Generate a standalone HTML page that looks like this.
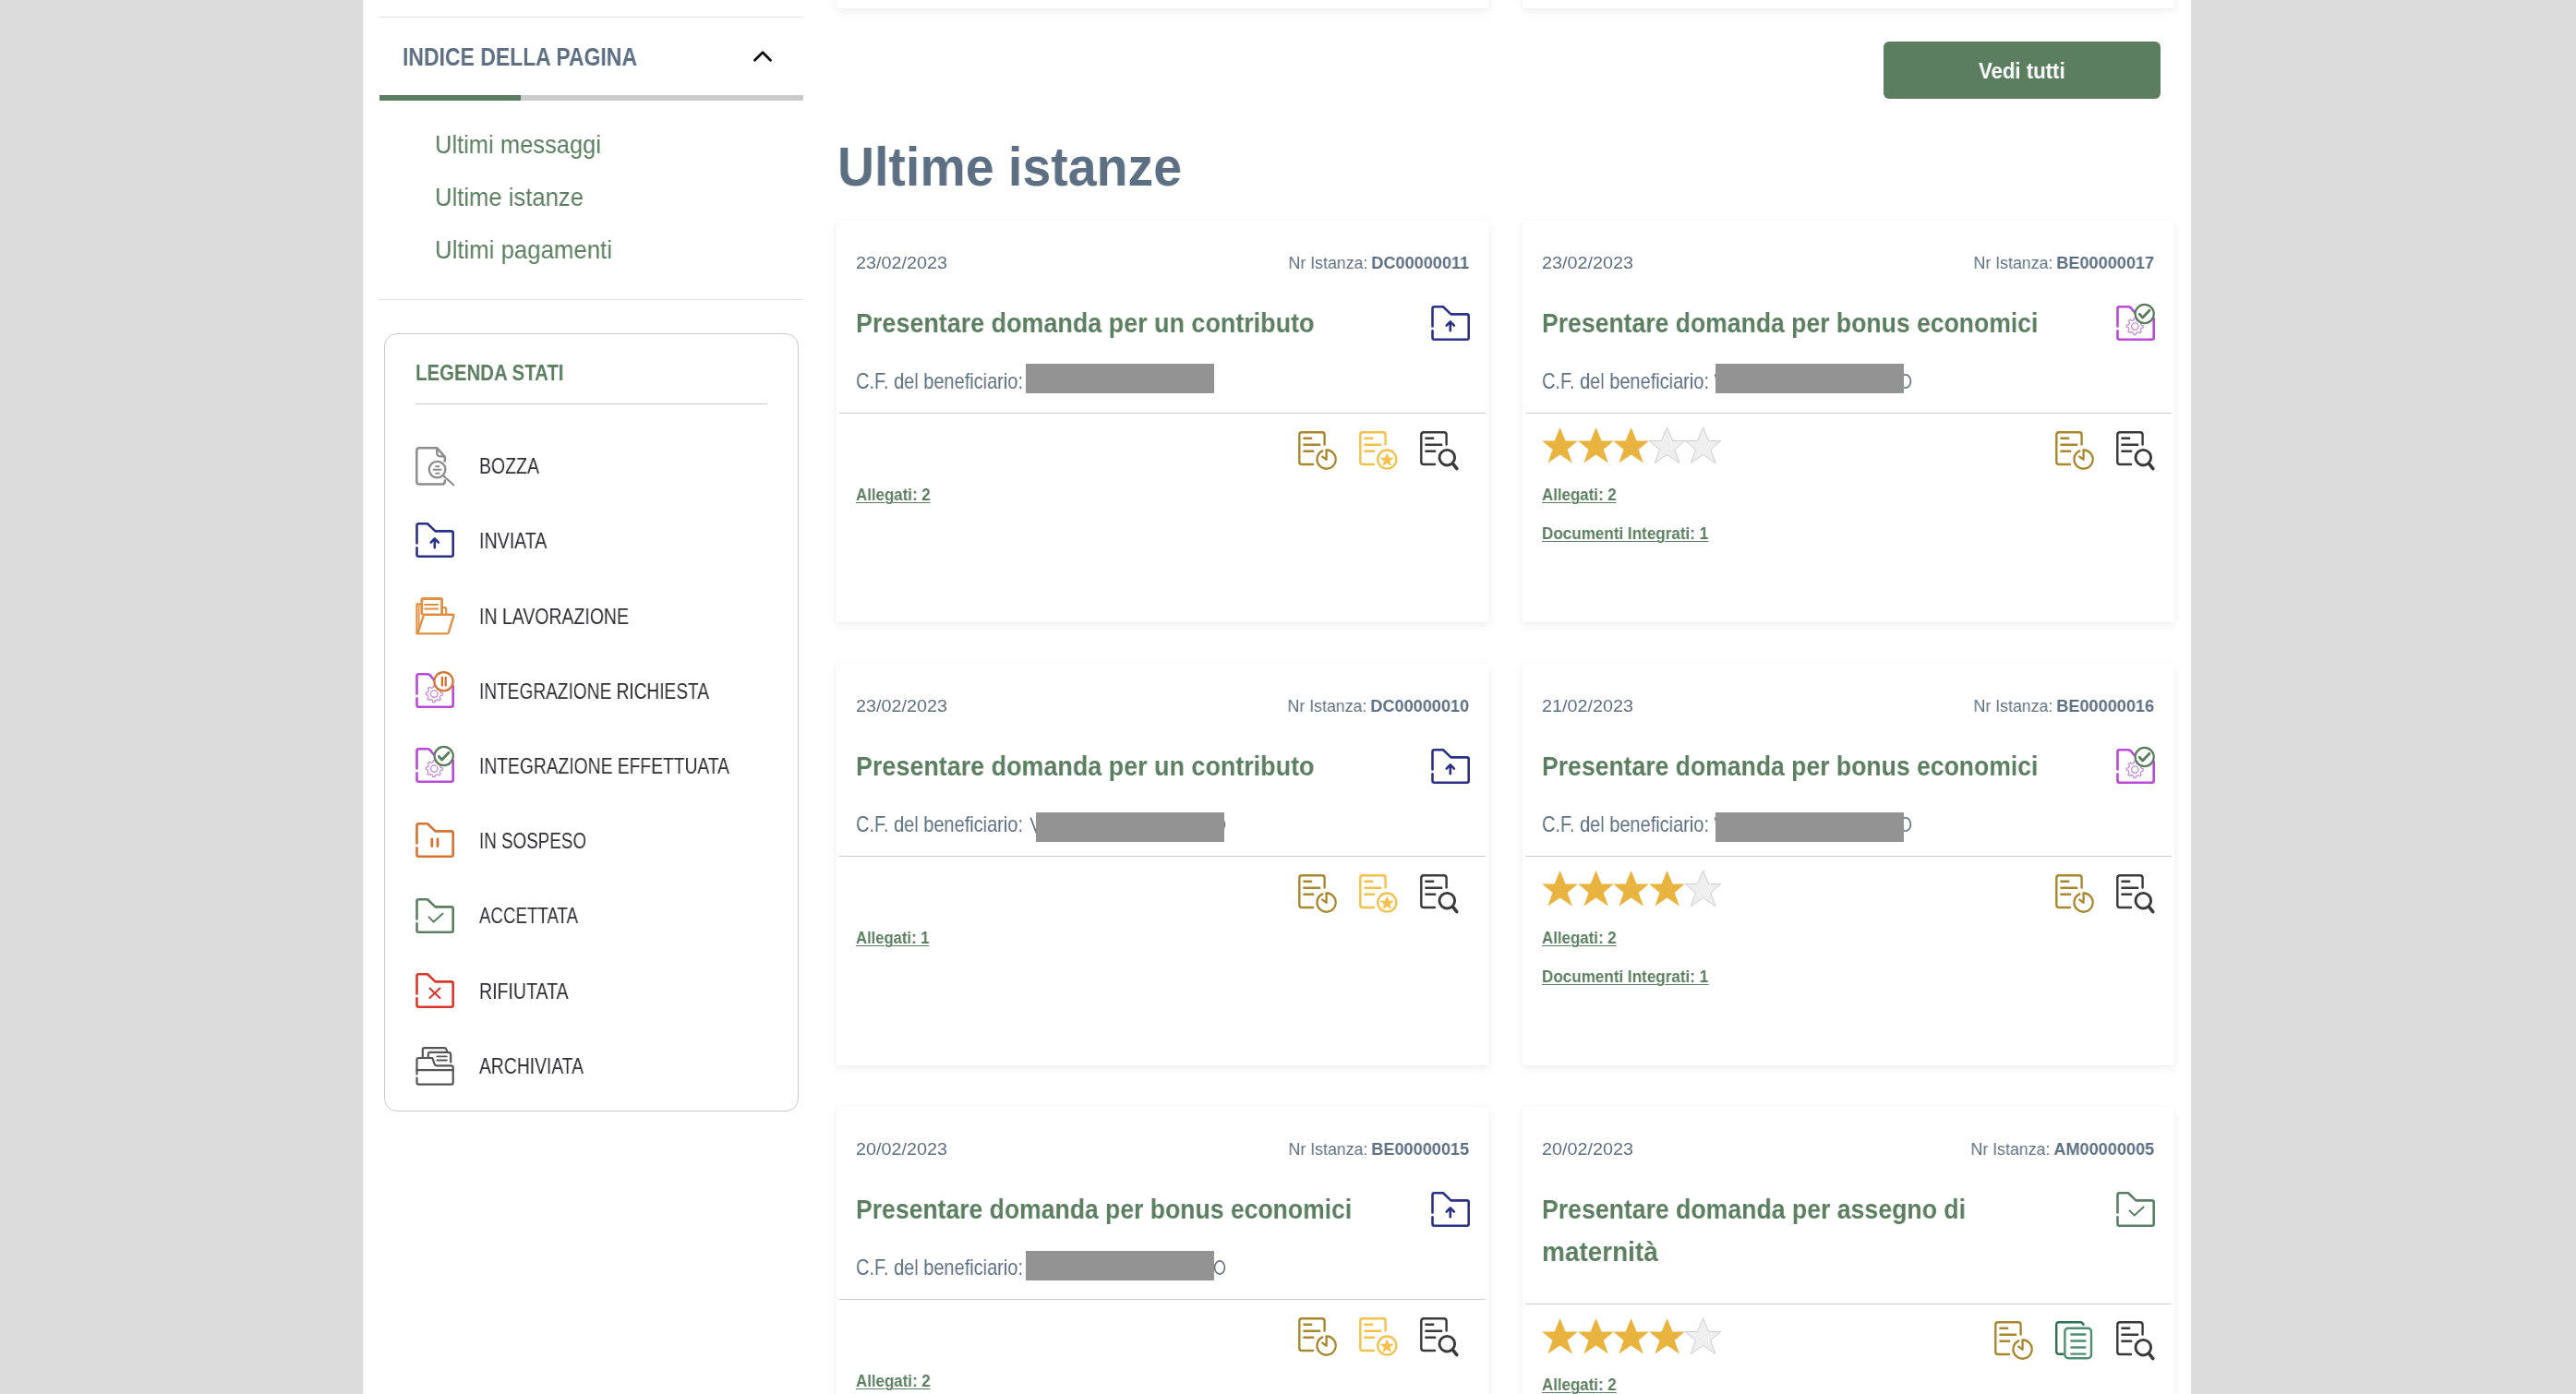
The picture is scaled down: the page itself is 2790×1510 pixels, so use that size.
<!DOCTYPE html>
<html><head><meta charset="utf-8"><title>Ultime istanze</title><style>
*{margin:0;padding:0;box-sizing:border-box}
html,body{width:2790px;height:1510px;overflow:hidden;background:#dcdcdc;font-family:"Liberation Sans",sans-serif}
.box{position:absolute}
.ic{position:absolute;overflow:visible}
.card{position:absolute;background:#fff;box-shadow:0 3px 9px rgba(0,0,0,0.07),0 0 2px rgba(0,0,0,0.03)}
.t{position:absolute;white-space:nowrap;will-change:transform}
</style></head>
<body>
<div class=box style="left:393px;top:0;width:1980px;height:1510px;background:#fff"></div>
<div class=box style="left:411px;top:18px;width:459px;height:1px;background:#e1e2e4"></div>
<div class=box style="left:411px;top:103px;width:459px;height:6px;background:#c9cacc"></div>
<div class=box style="left:411px;top:103px;width:153px;height:6px;background:#5b7e60"></div>
<svg class=ic style="left:810px;top:49.2px" width="32" height="24" viewBox="0 0 32 24"><path d="M7.5 16.2L16 7.8L24.5 16.2" stroke="#111" stroke-width="2.8" fill="none" stroke-linecap="round" stroke-linejoin="round"/></svg>
<div class=box style="left:411px;top:324px;width:459px;height:1px;background:#e1e2e4"></div>
<div class=box style="left:416px;top:361px;width:449px;height:843px;border:1.5px solid #c9c9c9;border-radius:14px"></div>
<div class=box style="left:450px;top:437px;width:381px;height:1px;background:#c9c9c9"></div>
<svg class=ic style="left:450.00px;top:484.00px" width="42" height="42" viewBox="0 0 42 42"><path d="M31.8 15.6V10.8L23.4 1.3H4Q1.3 1.3 1.3 4V37.8Q1.3 40.6 4 40.6H29Q31.8 40.6 31.8 37.8V36.6" stroke="#8d8d8d" stroke-width="2.5" fill="none" stroke-linecap="round" stroke-linejoin="round"/><path d="M23.2 1.8V6.6Q23.2 10.3 26.8 10.3H31.4" stroke="#8d8d8d" stroke-width="2.3" fill="none" stroke-linecap="round" stroke-linejoin="round"/><circle cx="23.6" cy="24.6" r="8.8" stroke="#8d8d8d" stroke-width="2.3" fill="none"/><path d="M29.8 31L41.2 41.3" stroke="#8d8d8d" stroke-width="2.2" fill="none" stroke-linecap="round" stroke-linejoin="round"/><path d="M21.4 21.3H26.2M18.8 24.8H28.4M21.4 28.8H26.2" stroke="#8d8d8d" stroke-width="1.9" fill="none"/></svg>
<svg class=ic style="left:450.00px;top:565.25px" width="42" height="42" viewBox="0 0 42 42"><path d="M1.5 23.4V4.2Q1.5 2.2 3.5 2.2H13L21.5 10.4H38.7Q40.7 10.4 40.7 12.4V35.8Q40.7 37.8 38.7 37.8H3.5Q1.5 37.8 1.5 35.8V28.4" stroke="#2b3187" stroke-width="2.6" fill="none" stroke-linecap="round" stroke-linejoin="round"/><path d="M20.8 28.2V18.8M16.7 22.6L20.8 18.4L24.9 22.6" stroke="#2b3187" stroke-width="2.6" fill="none" stroke-linecap="round" stroke-linejoin="round"/></svg>
<svg class=ic style="left:450.00px;top:646.50px" width="42" height="42" viewBox="0 0 42 42"><path d="M5 7.4H1.5V39.4" stroke="#df8f3f" stroke-width="2.2" fill="none" stroke-linecap="round" stroke-linejoin="round"/><path d="M3.9 8.4V36" stroke="#df8f3f" stroke-width="1.4" fill="none" stroke-linecap="round" stroke-linejoin="round"/><path d="M6.8 18V2.8Q6.8 1.5 8.2 1.5H27.2Q28.6 1.5 28.6 3V18" stroke="#df8f3f" stroke-width="2.8" fill="none" stroke-linecap="round" stroke-linejoin="round"/><path d="M9.4 8H24.9M9.4 12.6H24.9" stroke="#df8f3f" stroke-width="2" fill="none"/><path d="M28.6 11.2H31.4Q33.2 11.2 33.2 13V18.6" stroke="#df8f3f" stroke-width="2.2" fill="none" stroke-linecap="round" stroke-linejoin="round"/><path d="M9 18.8H40.2Q41.8 18.8 41.3 20.4L35.9 38Q35.5 39.4 34 39.4H3.4Q2.2 39.4 2.7 38Z" stroke="#df8f3f" stroke-width="2.4" fill="none" stroke-linecap="round" stroke-linejoin="round"/></svg>
<svg class=ic style="left:450.00px;top:727.75px" width="42" height="42" viewBox="0 0 42 42"><path d="M1.5 23.4V4.2Q1.5 2.2 3.5 2.2H13Q14.5 2.2 15.5 3.2L20 8.5M40.7 15V35.8Q40.7 37.8 38.7 37.8H3.5Q1.5 37.8 1.5 35.8V28.4" stroke="#b94ad7" stroke-width="2.6" fill="none" stroke-linecap="round" stroke-linejoin="round"/><polygon points="29.30,23.60 29.29,23.99 29.27,24.38 29.22,24.77 29.16,25.16 28.23,25.36 27.25,25.46 26.98,25.70 26.88,25.99 26.77,26.28 26.64,26.56 26.51,26.83 26.36,27.10 26.20,27.36 26.07,27.64 26.62,28.45 27.12,29.32 26.94,29.68 26.66,29.96 26.38,30.24 26.09,30.49 25.78,30.74 25.46,30.97 24.66,30.45 23.90,29.83 23.53,29.81 23.26,29.94 22.98,30.07 22.69,30.18 22.40,30.28 22.11,30.36 21.82,30.43 21.52,30.54 21.34,31.50 21.08,32.46 20.69,32.59 20.30,32.60 19.91,32.59 19.52,32.57 19.13,32.52 18.74,32.46 18.54,31.53 18.44,30.55 18.20,30.28 17.91,30.18 17.62,30.07 17.34,29.94 17.07,29.81 16.80,29.66 16.54,29.50 16.26,29.37 15.45,29.92 14.58,30.42 14.22,30.24 13.94,29.96 13.66,29.68 13.41,29.39 13.16,29.08 12.93,28.76 13.45,27.96 14.07,27.20 14.09,26.83 13.96,26.56 13.83,26.28 13.72,25.99 13.62,25.70 13.54,25.41 13.47,25.12 13.36,24.82 12.40,24.64 11.44,24.38 11.31,23.99 11.30,23.60 11.31,23.21 11.33,22.82 11.38,22.43 11.44,22.04 12.37,21.84 13.35,21.74 13.62,21.50 13.72,21.21 13.83,20.92 13.96,20.64 14.09,20.37 14.24,20.10 14.40,19.84 14.53,19.56 13.98,18.75 13.48,17.88 13.66,17.52 13.94,17.24 14.22,16.96 14.51,16.71 14.82,16.46 15.14,16.23 15.94,16.75 16.70,17.37 17.07,17.39 17.34,17.26 17.62,17.13 17.91,17.02 18.20,16.92 18.49,16.84 18.78,16.77 19.08,16.66 19.26,15.70 19.52,14.74 19.91,14.61 20.30,14.60 20.69,14.61 21.08,14.63 21.47,14.68 21.86,14.74 22.06,15.67 22.16,16.65 22.40,16.92 22.69,17.02 22.98,17.13 23.26,17.26 23.53,17.39 23.80,17.54 24.06,17.70 24.34,17.83 25.15,17.28 26.02,16.78 26.38,16.96 26.66,17.24 26.94,17.52 27.19,17.81 27.44,18.12 27.67,18.44 27.15,19.24 26.53,20.00 26.51,20.37 26.64,20.64 26.77,20.92 26.88,21.21 26.98,21.50 27.06,21.79 27.13,22.08 27.24,22.38 28.20,22.56 29.16,22.82 29.29,23.21" stroke="#c38bd8" stroke-width="1.3" fill="none" stroke-linejoin="round"/><circle cx="20.3" cy="23.6" r="3.7" stroke="#c38bd8" stroke-width="1.3" fill="none"/><circle cx="30.5" cy="10.2" r="10.1" fill="#fff" stroke="#d4722e" stroke-width="2.3"/><path d="M28.9 5.8V14.6M32.7 5.8V14.6" stroke="#d4722e" stroke-width="2.3" fill="none" stroke-linecap="round" stroke-linejoin="round"/></svg>
<svg class=ic style="left:450.00px;top:809.00px" width="42" height="42" viewBox="0 0 42 42"><path d="M1.5 23.4V4.2Q1.5 2.2 3.5 2.2H13Q14.5 2.2 15.5 3.2L20 8.5M40.7 15V35.8Q40.7 37.8 38.7 37.8H3.5Q1.5 37.8 1.5 35.8V28.4" stroke="#b94ad7" stroke-width="2.6" fill="none" stroke-linecap="round" stroke-linejoin="round"/><polygon points="29.30,23.60 29.29,23.99 29.27,24.38 29.22,24.77 29.16,25.16 28.23,25.36 27.25,25.46 26.98,25.70 26.88,25.99 26.77,26.28 26.64,26.56 26.51,26.83 26.36,27.10 26.20,27.36 26.07,27.64 26.62,28.45 27.12,29.32 26.94,29.68 26.66,29.96 26.38,30.24 26.09,30.49 25.78,30.74 25.46,30.97 24.66,30.45 23.90,29.83 23.53,29.81 23.26,29.94 22.98,30.07 22.69,30.18 22.40,30.28 22.11,30.36 21.82,30.43 21.52,30.54 21.34,31.50 21.08,32.46 20.69,32.59 20.30,32.60 19.91,32.59 19.52,32.57 19.13,32.52 18.74,32.46 18.54,31.53 18.44,30.55 18.20,30.28 17.91,30.18 17.62,30.07 17.34,29.94 17.07,29.81 16.80,29.66 16.54,29.50 16.26,29.37 15.45,29.92 14.58,30.42 14.22,30.24 13.94,29.96 13.66,29.68 13.41,29.39 13.16,29.08 12.93,28.76 13.45,27.96 14.07,27.20 14.09,26.83 13.96,26.56 13.83,26.28 13.72,25.99 13.62,25.70 13.54,25.41 13.47,25.12 13.36,24.82 12.40,24.64 11.44,24.38 11.31,23.99 11.30,23.60 11.31,23.21 11.33,22.82 11.38,22.43 11.44,22.04 12.37,21.84 13.35,21.74 13.62,21.50 13.72,21.21 13.83,20.92 13.96,20.64 14.09,20.37 14.24,20.10 14.40,19.84 14.53,19.56 13.98,18.75 13.48,17.88 13.66,17.52 13.94,17.24 14.22,16.96 14.51,16.71 14.82,16.46 15.14,16.23 15.94,16.75 16.70,17.37 17.07,17.39 17.34,17.26 17.62,17.13 17.91,17.02 18.20,16.92 18.49,16.84 18.78,16.77 19.08,16.66 19.26,15.70 19.52,14.74 19.91,14.61 20.30,14.60 20.69,14.61 21.08,14.63 21.47,14.68 21.86,14.74 22.06,15.67 22.16,16.65 22.40,16.92 22.69,17.02 22.98,17.13 23.26,17.26 23.53,17.39 23.80,17.54 24.06,17.70 24.34,17.83 25.15,17.28 26.02,16.78 26.38,16.96 26.66,17.24 26.94,17.52 27.19,17.81 27.44,18.12 27.67,18.44 27.15,19.24 26.53,20.00 26.51,20.37 26.64,20.64 26.77,20.92 26.88,21.21 26.98,21.50 27.06,21.79 27.13,22.08 27.24,22.38 28.20,22.56 29.16,22.82 29.29,23.21" stroke="#c38bd8" stroke-width="1.3" fill="none" stroke-linejoin="round"/><circle cx="20.3" cy="23.6" r="3.7" stroke="#c38bd8" stroke-width="1.3" fill="none"/><circle cx="30.7" cy="10" r="10.1" fill="#fff" stroke="#5a7d5e" stroke-width="2.2"/><path d="M25.4 10.4L28.7 13.9L36 6.2" stroke="#5a7d5e" stroke-width="2.9" fill="none" stroke-linecap="round" stroke-linejoin="round"/></svg>
<svg class=ic style="left:450.00px;top:890.25px" width="42" height="42" viewBox="0 0 42 42"><path d="M1.5 23.4V4.2Q1.5 2.2 3.5 2.2H13L21.5 10.4H38.7Q40.7 10.4 40.7 12.4V35.8Q40.7 37.8 38.7 37.8H3.5Q1.5 37.8 1.5 35.8V28.4" stroke="#d5732f" stroke-width="2.6" fill="none" stroke-linecap="round" stroke-linejoin="round"/><path d="M17.8 19V26.6M24 19V26.6" stroke="#d5732f" stroke-width="2.8" fill="none" stroke-linecap="round" stroke-linejoin="round"/></svg>
<svg class=ic style="left:450.00px;top:971.50px" width="42" height="42" viewBox="0 0 42 42"><path d="M1.5 23.4V4.2Q1.5 2.2 3.5 2.2H13L21.5 10.4H38.7Q40.7 10.4 40.7 12.4V35.8Q40.7 37.8 38.7 37.8H3.5Q1.5 37.8 1.5 35.8V28.4" stroke="#5b7f62" stroke-width="2.6" fill="none" stroke-linecap="round" stroke-linejoin="round"/><path d="M14.5 21.4L19.7 26.6L29.6 17.6" stroke="#5b7f62" stroke-width="2" fill="none" stroke-linecap="round" stroke-linejoin="round"/></svg>
<svg class=ic style="left:450.00px;top:1052.75px" width="42" height="42" viewBox="0 0 42 42"><path d="M1.5 23.4V4.2Q1.5 2.2 3.5 2.2H13L21.5 10.4H38.7Q40.7 10.4 40.7 12.4V35.8Q40.7 37.8 38.7 37.8H3.5Q1.5 37.8 1.5 35.8V28.4" stroke="#d9372c" stroke-width="2.6" fill="none" stroke-linecap="round" stroke-linejoin="round"/><path d="M15.4 17.6L26.4 28M26.4 17.6L15.4 28" stroke="#d9372c" stroke-width="2.1" fill="none" stroke-linecap="round" stroke-linejoin="round"/></svg>
<svg class=ic style="left:450.00px;top:1134.00px" width="42" height="42" viewBox="0 0 42 42"><path d="M1.5 29.6V14Q1.5 12 3.5 12H18.3L20.6 18.6Q21.3 20.4 23.2 20.4H39Q40.7 20.4 40.7 22.2V38.8Q40.7 40.6 39 40.6H3.3Q1.5 40.6 1.5 38.8V33.6" stroke="#555555" stroke-width="2.2" fill="none" stroke-linecap="round" stroke-linejoin="round"/><path d="M1.5 25.2H40.7" stroke="#555555" stroke-width="2.2" fill="none" stroke-linecap="round" stroke-linejoin="round"/><path d="M7.8 12V3Q7.8 1.2 9.6 1.2H31.6Q33.2 1.2 33.6 3L34.2 5.6" stroke="#555555" stroke-width="2.2" fill="none" stroke-linecap="round" stroke-linejoin="round"/><path d="M13.8 12V8Q13.8 5.8 16 5.8H35.6Q38.2 5.8 38.2 8.4V16.6" stroke="#555555" stroke-width="2.2" fill="none" stroke-linecap="round" stroke-linejoin="round"/><path d="M23.4 10.4H33.8M23.4 14.5H33.8" stroke="#555555" stroke-width="1.9" fill="none" stroke-linecap="round" stroke-linejoin="round"/></svg>
<div class="card" style="left:906px;top:-40px;width:707px;height:49px"></div>
<div class="card" style="left:1649px;top:-40px;width:706px;height:49px"></div>
<div class=box style="left:2040px;top:45px;width:300px;height:62px;background:#5b7e60;border-radius:6px"></div>
<div class="card" style="left:906px;top:239px;width:707px;height:435px"></div>
<div class="card" style="left:1649px;top:239px;width:706px;height:435px"></div>
<div class="card" style="left:906px;top:719px;width:707px;height:435px"></div>
<div class="card" style="left:1649px;top:719px;width:706px;height:435px"></div>
<div class="card" style="left:906px;top:1199px;width:707px;height:435px"></div>
<div class="card" style="left:1649px;top:1199px;width:706px;height:435px"></div>
<svg class=ic style="left:1550.00px;top:330.00px" width="42" height="42" viewBox="0 0 42 42"><path d="M1.5 23.4V4.2Q1.5 2.2 3.5 2.2H13L21.5 10.4H38.7Q40.7 10.4 40.7 12.4V35.8Q40.7 37.8 38.7 37.8H3.5Q1.5 37.8 1.5 35.8V28.4" stroke="#2b3187" stroke-width="2.6" fill="none" stroke-linecap="round" stroke-linejoin="round"/><path d="M20.8 28.2V18.8M16.7 22.6L20.8 18.4L24.9 22.6" stroke="#2b3187" stroke-width="2.6" fill="none" stroke-linecap="round" stroke-linejoin="round"/></svg>
<div class=box style="left:1111px;top:394.2px;width:204.0px;height:31.5px;background:#939393"></div>
<div class=box style="left:909px;top:447px;width:700px;height:1px;background:#cbcbcb"></div>
<svg class=ic style="left:1406.00px;top:467.00px" width="42" height="42" viewBox="0 0 42 42"><path d="M16 36H4Q1.3 36 1.3 33.3V4Q1.3 1.3 4 1.3H25.9Q28.6 1.3 28.6 4V14.6" stroke="#a8872e" stroke-width="2.4" fill="none" stroke-linecap="round" stroke-linejoin="round"/><path d="M5.4 7.7H15.2M5.4 14.8H24.2M5.4 21.8H17.2" stroke="#a8872e" stroke-width="2.4" fill="none"/><path d="M30.6 20.5A10.1 10.1 0 1 1 26.4 21.4" stroke="#a8872e" stroke-width="2.3" fill="none" stroke-linecap="round" stroke-linejoin="round"/><path d="M30.6 20.8V30.8L26.2 27.6" stroke="#a8872e" stroke-width="2.3" fill="none" stroke-linecap="round" stroke-linejoin="round"/></svg>
<svg class=ic style="left:1472.00px;top:467.00px" width="42" height="42" viewBox="0 0 42 42"><path d="M16 36H4Q1.3 36 1.3 33.3V4Q1.3 1.3 4 1.3H25.9Q28.6 1.3 28.6 4V14.6" stroke="#f2c14c" stroke-width="2.4" fill="none" stroke-linecap="round" stroke-linejoin="round"/><path d="M5.4 7.7H15.2M5.4 14.8H24.2M5.4 21.8H17.2" stroke="#f2c14c" stroke-width="2.4" fill="none"/><circle cx="30.3" cy="30.6" r="10.1" stroke="#f2c14c" stroke-width="2.3" fill="none"/><polygon points="30.20,24.20 31.96,28.97 37.05,29.18 33.05,32.33 34.43,37.22 30.20,34.40 25.97,37.22 27.35,32.33 23.35,29.18 28.44,28.97" fill="#f2c14c" stroke="#f2c14c" stroke-width="0.8" stroke-linejoin="round"/></svg>
<svg class=ic style="left:1538.00px;top:467.00px" width="42" height="42" viewBox="0 0 42 42"><path d="M16 36H4Q1.3 36 1.3 33.3V4Q1.3 1.3 4 1.3H25.9Q28.6 1.3 28.6 4V14.6" stroke="#3a3a3a" stroke-width="2.4" fill="none" stroke-linecap="round" stroke-linejoin="round"/><path d="M5.4 7.7H15.2M5.4 14.8H24.2M5.4 21.8H17.2" stroke="#3a3a3a" stroke-width="2.4" fill="none"/><circle cx="29.3" cy="28.7" r="8.3" stroke="#3a3a3a" stroke-width="2.9" fill="none"/><path d="M35.4 35.2L39.8 40.6" stroke="#3a3a3a" stroke-width="3.6" fill="none" stroke-linecap="round" stroke-linejoin="round"/></svg>
<svg class=ic style="left:2292.00px;top:330.00px" width="42" height="42" viewBox="0 0 42 42"><path d="M1.5 23.4V4.2Q1.5 2.2 3.5 2.2H13Q14.5 2.2 15.5 3.2L20 8.5M40.7 15V35.8Q40.7 37.8 38.7 37.8H3.5Q1.5 37.8 1.5 35.8V28.4" stroke="#b94ad7" stroke-width="2.6" fill="none" stroke-linecap="round" stroke-linejoin="round"/><polygon points="29.30,23.60 29.29,23.99 29.27,24.38 29.22,24.77 29.16,25.16 28.23,25.36 27.25,25.46 26.98,25.70 26.88,25.99 26.77,26.28 26.64,26.56 26.51,26.83 26.36,27.10 26.20,27.36 26.07,27.64 26.62,28.45 27.12,29.32 26.94,29.68 26.66,29.96 26.38,30.24 26.09,30.49 25.78,30.74 25.46,30.97 24.66,30.45 23.90,29.83 23.53,29.81 23.26,29.94 22.98,30.07 22.69,30.18 22.40,30.28 22.11,30.36 21.82,30.43 21.52,30.54 21.34,31.50 21.08,32.46 20.69,32.59 20.30,32.60 19.91,32.59 19.52,32.57 19.13,32.52 18.74,32.46 18.54,31.53 18.44,30.55 18.20,30.28 17.91,30.18 17.62,30.07 17.34,29.94 17.07,29.81 16.80,29.66 16.54,29.50 16.26,29.37 15.45,29.92 14.58,30.42 14.22,30.24 13.94,29.96 13.66,29.68 13.41,29.39 13.16,29.08 12.93,28.76 13.45,27.96 14.07,27.20 14.09,26.83 13.96,26.56 13.83,26.28 13.72,25.99 13.62,25.70 13.54,25.41 13.47,25.12 13.36,24.82 12.40,24.64 11.44,24.38 11.31,23.99 11.30,23.60 11.31,23.21 11.33,22.82 11.38,22.43 11.44,22.04 12.37,21.84 13.35,21.74 13.62,21.50 13.72,21.21 13.83,20.92 13.96,20.64 14.09,20.37 14.24,20.10 14.40,19.84 14.53,19.56 13.98,18.75 13.48,17.88 13.66,17.52 13.94,17.24 14.22,16.96 14.51,16.71 14.82,16.46 15.14,16.23 15.94,16.75 16.70,17.37 17.07,17.39 17.34,17.26 17.62,17.13 17.91,17.02 18.20,16.92 18.49,16.84 18.78,16.77 19.08,16.66 19.26,15.70 19.52,14.74 19.91,14.61 20.30,14.60 20.69,14.61 21.08,14.63 21.47,14.68 21.86,14.74 22.06,15.67 22.16,16.65 22.40,16.92 22.69,17.02 22.98,17.13 23.26,17.26 23.53,17.39 23.80,17.54 24.06,17.70 24.34,17.83 25.15,17.28 26.02,16.78 26.38,16.96 26.66,17.24 26.94,17.52 27.19,17.81 27.44,18.12 27.67,18.44 27.15,19.24 26.53,20.00 26.51,20.37 26.64,20.64 26.77,20.92 26.88,21.21 26.98,21.50 27.06,21.79 27.13,22.08 27.24,22.38 28.20,22.56 29.16,22.82 29.29,23.21" stroke="#c38bd8" stroke-width="1.3" fill="none" stroke-linejoin="round"/><circle cx="20.3" cy="23.6" r="3.7" stroke="#c38bd8" stroke-width="1.3" fill="none"/><circle cx="30.7" cy="10" r="10.1" fill="#fff" stroke="#5a7d5e" stroke-width="2.2"/><path d="M25.4 10.4L28.7 13.9L36 6.2" stroke="#5a7d5e" stroke-width="2.9" fill="none" stroke-linecap="round" stroke-linejoin="round"/></svg>
<svg class=ic style="left:1854.7px;top:403px" width="16" height="20" viewBox="0 0 16 20"><path d="M2.3 2.6L7.8 17.6L13.3 2.6" fill="none" stroke="#5d6f82" stroke-width="1.6"/></svg>
<svg class=ic style="left:2056px;top:403px" width="16" height="20" viewBox="0 0 16 20"><ellipse cx="8" cy="10" rx="5.4" ry="7.2" fill="none" stroke="#5d6f82" stroke-width="1.6"/></svg>
<div class=box style="left:1858.1px;top:394.2px;width:203.8px;height:31.5px;background:#939393"></div>
<div class=box style="left:1652px;top:447px;width:700px;height:1px;background:#cbcbcb"></div>
<svg class=ic style="left:2226.00px;top:467.00px" width="42" height="42" viewBox="0 0 42 42"><path d="M16 36H4Q1.3 36 1.3 33.3V4Q1.3 1.3 4 1.3H25.9Q28.6 1.3 28.6 4V14.6" stroke="#a8872e" stroke-width="2.4" fill="none" stroke-linecap="round" stroke-linejoin="round"/><path d="M5.4 7.7H15.2M5.4 14.8H24.2M5.4 21.8H17.2" stroke="#a8872e" stroke-width="2.4" fill="none"/><path d="M30.6 20.5A10.1 10.1 0 1 1 26.4 21.4" stroke="#a8872e" stroke-width="2.3" fill="none" stroke-linecap="round" stroke-linejoin="round"/><path d="M30.6 20.8V30.8L26.2 27.6" stroke="#a8872e" stroke-width="2.3" fill="none" stroke-linecap="round" stroke-linejoin="round"/></svg>
<svg class=ic style="left:2292.00px;top:467.00px" width="42" height="42" viewBox="0 0 42 42"><path d="M16 36H4Q1.3 36 1.3 33.3V4Q1.3 1.3 4 1.3H25.9Q28.6 1.3 28.6 4V14.6" stroke="#3a3a3a" stroke-width="2.4" fill="none" stroke-linecap="round" stroke-linejoin="round"/><path d="M5.4 7.7H15.2M5.4 14.8H24.2M5.4 21.8H17.2" stroke="#3a3a3a" stroke-width="2.4" fill="none"/><circle cx="29.3" cy="28.7" r="8.3" stroke="#3a3a3a" stroke-width="2.9" fill="none"/><path d="M35.4 35.2L39.8 40.6" stroke="#3a3a3a" stroke-width="3.6" fill="none" stroke-linecap="round" stroke-linejoin="round"/></svg>
<svg class=ic style="left:1669.60px;top:463.00px" width="40" height="40" viewBox="0 0 40 40"><polygon points="19.6,0 25.6,14.4 38.8,14.5 27.7,24 32.9,38.5 19.6,29.5 6.4,38.5 11.5,24 0.2,14.5 13.6,14.4" fill="#e8b43f"/></svg><svg class=ic style="left:1708.50px;top:463.00px" width="40" height="40" viewBox="0 0 40 40"><polygon points="19.6,0 25.6,14.4 38.8,14.5 27.7,24 32.9,38.5 19.6,29.5 6.4,38.5 11.5,24 0.2,14.5 13.6,14.4" fill="#e8b43f"/></svg><svg class=ic style="left:1747.40px;top:463.00px" width="40" height="40" viewBox="0 0 40 40"><polygon points="19.6,0 25.6,14.4 38.8,14.5 27.7,24 32.9,38.5 19.6,29.5 6.4,38.5 11.5,24 0.2,14.5 13.6,14.4" fill="#e8b43f"/></svg><svg class=ic style="left:1786.30px;top:463.00px" width="40" height="40" viewBox="0 0 40 40"><polygon points="19.6,0 25.6,14.4 38.8,14.5 27.7,24 32.9,38.5 19.6,29.5 6.4,38.5 11.5,24 0.2,14.5 13.6,14.4" fill="#efefef" stroke="#cdcdcd" stroke-width="1" stroke-linejoin="round"/></svg><svg class=ic style="left:1825.20px;top:463.00px" width="40" height="40" viewBox="0 0 40 40"><polygon points="19.6,0 25.6,14.4 38.8,14.5 27.7,24 32.9,38.5 19.6,29.5 6.4,38.5 11.5,24 0.2,14.5 13.6,14.4" fill="#efefef" stroke="#cdcdcd" stroke-width="1" stroke-linejoin="round"/></svg>
<svg class=ic style="left:1550.00px;top:810.00px" width="42" height="42" viewBox="0 0 42 42"><path d="M1.5 23.4V4.2Q1.5 2.2 3.5 2.2H13L21.5 10.4H38.7Q40.7 10.4 40.7 12.4V35.8Q40.7 37.8 38.7 37.8H3.5Q1.5 37.8 1.5 35.8V28.4" stroke="#2b3187" stroke-width="2.6" fill="none" stroke-linecap="round" stroke-linejoin="round"/><path d="M20.8 28.2V18.8M16.7 22.6L20.8 18.4L24.9 22.6" stroke="#2b3187" stroke-width="2.6" fill="none" stroke-linecap="round" stroke-linejoin="round"/></svg>
<svg class=ic style="left:1113.5px;top:883px" width="16" height="20" viewBox="0 0 16 20"><path d="M2.3 2.6L7.8 17.6L13.3 2.6" fill="none" stroke="#5d6f82" stroke-width="1.6"/></svg>
<svg class=ic style="left:1312.9px;top:883px" width="16" height="20" viewBox="0 0 16 20"><ellipse cx="8" cy="10" rx="5.4" ry="7.2" fill="none" stroke="#5d6f82" stroke-width="1.6"/></svg>
<div class=box style="left:1122px;top:880.2px;width:203.8px;height:31.4px;background:#939393"></div>
<div class=box style="left:909px;top:927px;width:700px;height:1px;background:#cbcbcb"></div>
<svg class=ic style="left:1406.00px;top:947.00px" width="42" height="42" viewBox="0 0 42 42"><path d="M16 36H4Q1.3 36 1.3 33.3V4Q1.3 1.3 4 1.3H25.9Q28.6 1.3 28.6 4V14.6" stroke="#a8872e" stroke-width="2.4" fill="none" stroke-linecap="round" stroke-linejoin="round"/><path d="M5.4 7.7H15.2M5.4 14.8H24.2M5.4 21.8H17.2" stroke="#a8872e" stroke-width="2.4" fill="none"/><path d="M30.6 20.5A10.1 10.1 0 1 1 26.4 21.4" stroke="#a8872e" stroke-width="2.3" fill="none" stroke-linecap="round" stroke-linejoin="round"/><path d="M30.6 20.8V30.8L26.2 27.6" stroke="#a8872e" stroke-width="2.3" fill="none" stroke-linecap="round" stroke-linejoin="round"/></svg>
<svg class=ic style="left:1472.00px;top:947.00px" width="42" height="42" viewBox="0 0 42 42"><path d="M16 36H4Q1.3 36 1.3 33.3V4Q1.3 1.3 4 1.3H25.9Q28.6 1.3 28.6 4V14.6" stroke="#f2c14c" stroke-width="2.4" fill="none" stroke-linecap="round" stroke-linejoin="round"/><path d="M5.4 7.7H15.2M5.4 14.8H24.2M5.4 21.8H17.2" stroke="#f2c14c" stroke-width="2.4" fill="none"/><circle cx="30.3" cy="30.6" r="10.1" stroke="#f2c14c" stroke-width="2.3" fill="none"/><polygon points="30.20,24.20 31.96,28.97 37.05,29.18 33.05,32.33 34.43,37.22 30.20,34.40 25.97,37.22 27.35,32.33 23.35,29.18 28.44,28.97" fill="#f2c14c" stroke="#f2c14c" stroke-width="0.8" stroke-linejoin="round"/></svg>
<svg class=ic style="left:1538.00px;top:947.00px" width="42" height="42" viewBox="0 0 42 42"><path d="M16 36H4Q1.3 36 1.3 33.3V4Q1.3 1.3 4 1.3H25.9Q28.6 1.3 28.6 4V14.6" stroke="#3a3a3a" stroke-width="2.4" fill="none" stroke-linecap="round" stroke-linejoin="round"/><path d="M5.4 7.7H15.2M5.4 14.8H24.2M5.4 21.8H17.2" stroke="#3a3a3a" stroke-width="2.4" fill="none"/><circle cx="29.3" cy="28.7" r="8.3" stroke="#3a3a3a" stroke-width="2.9" fill="none"/><path d="M35.4 35.2L39.8 40.6" stroke="#3a3a3a" stroke-width="3.6" fill="none" stroke-linecap="round" stroke-linejoin="round"/></svg>
<svg class=ic style="left:2292.00px;top:810.00px" width="42" height="42" viewBox="0 0 42 42"><path d="M1.5 23.4V4.2Q1.5 2.2 3.5 2.2H13Q14.5 2.2 15.5 3.2L20 8.5M40.7 15V35.8Q40.7 37.8 38.7 37.8H3.5Q1.5 37.8 1.5 35.8V28.4" stroke="#b94ad7" stroke-width="2.6" fill="none" stroke-linecap="round" stroke-linejoin="round"/><polygon points="29.30,23.60 29.29,23.99 29.27,24.38 29.22,24.77 29.16,25.16 28.23,25.36 27.25,25.46 26.98,25.70 26.88,25.99 26.77,26.28 26.64,26.56 26.51,26.83 26.36,27.10 26.20,27.36 26.07,27.64 26.62,28.45 27.12,29.32 26.94,29.68 26.66,29.96 26.38,30.24 26.09,30.49 25.78,30.74 25.46,30.97 24.66,30.45 23.90,29.83 23.53,29.81 23.26,29.94 22.98,30.07 22.69,30.18 22.40,30.28 22.11,30.36 21.82,30.43 21.52,30.54 21.34,31.50 21.08,32.46 20.69,32.59 20.30,32.60 19.91,32.59 19.52,32.57 19.13,32.52 18.74,32.46 18.54,31.53 18.44,30.55 18.20,30.28 17.91,30.18 17.62,30.07 17.34,29.94 17.07,29.81 16.80,29.66 16.54,29.50 16.26,29.37 15.45,29.92 14.58,30.42 14.22,30.24 13.94,29.96 13.66,29.68 13.41,29.39 13.16,29.08 12.93,28.76 13.45,27.96 14.07,27.20 14.09,26.83 13.96,26.56 13.83,26.28 13.72,25.99 13.62,25.70 13.54,25.41 13.47,25.12 13.36,24.82 12.40,24.64 11.44,24.38 11.31,23.99 11.30,23.60 11.31,23.21 11.33,22.82 11.38,22.43 11.44,22.04 12.37,21.84 13.35,21.74 13.62,21.50 13.72,21.21 13.83,20.92 13.96,20.64 14.09,20.37 14.24,20.10 14.40,19.84 14.53,19.56 13.98,18.75 13.48,17.88 13.66,17.52 13.94,17.24 14.22,16.96 14.51,16.71 14.82,16.46 15.14,16.23 15.94,16.75 16.70,17.37 17.07,17.39 17.34,17.26 17.62,17.13 17.91,17.02 18.20,16.92 18.49,16.84 18.78,16.77 19.08,16.66 19.26,15.70 19.52,14.74 19.91,14.61 20.30,14.60 20.69,14.61 21.08,14.63 21.47,14.68 21.86,14.74 22.06,15.67 22.16,16.65 22.40,16.92 22.69,17.02 22.98,17.13 23.26,17.26 23.53,17.39 23.80,17.54 24.06,17.70 24.34,17.83 25.15,17.28 26.02,16.78 26.38,16.96 26.66,17.24 26.94,17.52 27.19,17.81 27.44,18.12 27.67,18.44 27.15,19.24 26.53,20.00 26.51,20.37 26.64,20.64 26.77,20.92 26.88,21.21 26.98,21.50 27.06,21.79 27.13,22.08 27.24,22.38 28.20,22.56 29.16,22.82 29.29,23.21" stroke="#c38bd8" stroke-width="1.3" fill="none" stroke-linejoin="round"/><circle cx="20.3" cy="23.6" r="3.7" stroke="#c38bd8" stroke-width="1.3" fill="none"/><circle cx="30.7" cy="10" r="10.1" fill="#fff" stroke="#5a7d5e" stroke-width="2.2"/><path d="M25.4 10.4L28.7 13.9L36 6.2" stroke="#5a7d5e" stroke-width="2.9" fill="none" stroke-linecap="round" stroke-linejoin="round"/></svg>
<svg class=ic style="left:1854.7px;top:883px" width="16" height="20" viewBox="0 0 16 20"><path d="M2.3 2.6L7.8 17.6L13.3 2.6" fill="none" stroke="#5d6f82" stroke-width="1.6"/></svg>
<svg class=ic style="left:2056px;top:883px" width="16" height="20" viewBox="0 0 16 20"><ellipse cx="8" cy="10" rx="5.4" ry="7.2" fill="none" stroke="#5d6f82" stroke-width="1.6"/></svg>
<div class=box style="left:1858.1px;top:880.2px;width:203.8px;height:31.4px;background:#939393"></div>
<div class=box style="left:1652px;top:927px;width:700px;height:1px;background:#cbcbcb"></div>
<svg class=ic style="left:2226.00px;top:947.00px" width="42" height="42" viewBox="0 0 42 42"><path d="M16 36H4Q1.3 36 1.3 33.3V4Q1.3 1.3 4 1.3H25.9Q28.6 1.3 28.6 4V14.6" stroke="#a8872e" stroke-width="2.4" fill="none" stroke-linecap="round" stroke-linejoin="round"/><path d="M5.4 7.7H15.2M5.4 14.8H24.2M5.4 21.8H17.2" stroke="#a8872e" stroke-width="2.4" fill="none"/><path d="M30.6 20.5A10.1 10.1 0 1 1 26.4 21.4" stroke="#a8872e" stroke-width="2.3" fill="none" stroke-linecap="round" stroke-linejoin="round"/><path d="M30.6 20.8V30.8L26.2 27.6" stroke="#a8872e" stroke-width="2.3" fill="none" stroke-linecap="round" stroke-linejoin="round"/></svg>
<svg class=ic style="left:2292.00px;top:947.00px" width="42" height="42" viewBox="0 0 42 42"><path d="M16 36H4Q1.3 36 1.3 33.3V4Q1.3 1.3 4 1.3H25.9Q28.6 1.3 28.6 4V14.6" stroke="#3a3a3a" stroke-width="2.4" fill="none" stroke-linecap="round" stroke-linejoin="round"/><path d="M5.4 7.7H15.2M5.4 14.8H24.2M5.4 21.8H17.2" stroke="#3a3a3a" stroke-width="2.4" fill="none"/><circle cx="29.3" cy="28.7" r="8.3" stroke="#3a3a3a" stroke-width="2.9" fill="none"/><path d="M35.4 35.2L39.8 40.6" stroke="#3a3a3a" stroke-width="3.6" fill="none" stroke-linecap="round" stroke-linejoin="round"/></svg>
<svg class=ic style="left:1669.60px;top:943.00px" width="40" height="40" viewBox="0 0 40 40"><polygon points="19.6,0 25.6,14.4 38.8,14.5 27.7,24 32.9,38.5 19.6,29.5 6.4,38.5 11.5,24 0.2,14.5 13.6,14.4" fill="#e8b43f"/></svg><svg class=ic style="left:1708.50px;top:943.00px" width="40" height="40" viewBox="0 0 40 40"><polygon points="19.6,0 25.6,14.4 38.8,14.5 27.7,24 32.9,38.5 19.6,29.5 6.4,38.5 11.5,24 0.2,14.5 13.6,14.4" fill="#e8b43f"/></svg><svg class=ic style="left:1747.40px;top:943.00px" width="40" height="40" viewBox="0 0 40 40"><polygon points="19.6,0 25.6,14.4 38.8,14.5 27.7,24 32.9,38.5 19.6,29.5 6.4,38.5 11.5,24 0.2,14.5 13.6,14.4" fill="#e8b43f"/></svg><svg class=ic style="left:1786.30px;top:943.00px" width="40" height="40" viewBox="0 0 40 40"><polygon points="19.6,0 25.6,14.4 38.8,14.5 27.7,24 32.9,38.5 19.6,29.5 6.4,38.5 11.5,24 0.2,14.5 13.6,14.4" fill="#e8b43f"/></svg><svg class=ic style="left:1825.20px;top:943.00px" width="40" height="40" viewBox="0 0 40 40"><polygon points="19.6,0 25.6,14.4 38.8,14.5 27.7,24 32.9,38.5 19.6,29.5 6.4,38.5 11.5,24 0.2,14.5 13.6,14.4" fill="#efefef" stroke="#cdcdcd" stroke-width="1" stroke-linejoin="round"/></svg>
<svg class=ic style="left:1550.00px;top:1290.00px" width="42" height="42" viewBox="0 0 42 42"><path d="M1.5 23.4V4.2Q1.5 2.2 3.5 2.2H13L21.5 10.4H38.7Q40.7 10.4 40.7 12.4V35.8Q40.7 37.8 38.7 37.8H3.5Q1.5 37.8 1.5 35.8V28.4" stroke="#2b3187" stroke-width="2.6" fill="none" stroke-linecap="round" stroke-linejoin="round"/><path d="M20.8 28.2V18.8M16.7 22.6L20.8 18.4L24.9 22.6" stroke="#2b3187" stroke-width="2.6" fill="none" stroke-linecap="round" stroke-linejoin="round"/></svg>
<svg class=ic style="left:1313.15px;top:1363px" width="16" height="20" viewBox="0 0 16 20"><ellipse cx="8" cy="10" rx="5.4" ry="7.2" fill="none" stroke="#5d6f82" stroke-width="1.6"/></svg>
<div class=box style="left:1111px;top:1355.2px;width:203.7px;height:31.4px;background:#939393"></div>
<div class=box style="left:909px;top:1407px;width:700px;height:1px;background:#cbcbcb"></div>
<svg class=ic style="left:1406.00px;top:1427.00px" width="42" height="42" viewBox="0 0 42 42"><path d="M16 36H4Q1.3 36 1.3 33.3V4Q1.3 1.3 4 1.3H25.9Q28.6 1.3 28.6 4V14.6" stroke="#a8872e" stroke-width="2.4" fill="none" stroke-linecap="round" stroke-linejoin="round"/><path d="M5.4 7.7H15.2M5.4 14.8H24.2M5.4 21.8H17.2" stroke="#a8872e" stroke-width="2.4" fill="none"/><path d="M30.6 20.5A10.1 10.1 0 1 1 26.4 21.4" stroke="#a8872e" stroke-width="2.3" fill="none" stroke-linecap="round" stroke-linejoin="round"/><path d="M30.6 20.8V30.8L26.2 27.6" stroke="#a8872e" stroke-width="2.3" fill="none" stroke-linecap="round" stroke-linejoin="round"/></svg>
<svg class=ic style="left:1472.00px;top:1427.00px" width="42" height="42" viewBox="0 0 42 42"><path d="M16 36H4Q1.3 36 1.3 33.3V4Q1.3 1.3 4 1.3H25.9Q28.6 1.3 28.6 4V14.6" stroke="#f2c14c" stroke-width="2.4" fill="none" stroke-linecap="round" stroke-linejoin="round"/><path d="M5.4 7.7H15.2M5.4 14.8H24.2M5.4 21.8H17.2" stroke="#f2c14c" stroke-width="2.4" fill="none"/><circle cx="30.3" cy="30.6" r="10.1" stroke="#f2c14c" stroke-width="2.3" fill="none"/><polygon points="30.20,24.20 31.96,28.97 37.05,29.18 33.05,32.33 34.43,37.22 30.20,34.40 25.97,37.22 27.35,32.33 23.35,29.18 28.44,28.97" fill="#f2c14c" stroke="#f2c14c" stroke-width="0.8" stroke-linejoin="round"/></svg>
<svg class=ic style="left:1538.00px;top:1427.00px" width="42" height="42" viewBox="0 0 42 42"><path d="M16 36H4Q1.3 36 1.3 33.3V4Q1.3 1.3 4 1.3H25.9Q28.6 1.3 28.6 4V14.6" stroke="#3a3a3a" stroke-width="2.4" fill="none" stroke-linecap="round" stroke-linejoin="round"/><path d="M5.4 7.7H15.2M5.4 14.8H24.2M5.4 21.8H17.2" stroke="#3a3a3a" stroke-width="2.4" fill="none"/><circle cx="29.3" cy="28.7" r="8.3" stroke="#3a3a3a" stroke-width="2.9" fill="none"/><path d="M35.4 35.2L39.8 40.6" stroke="#3a3a3a" stroke-width="3.6" fill="none" stroke-linecap="round" stroke-linejoin="round"/></svg>
<svg class=ic style="left:2292.00px;top:1290.00px" width="42" height="42" viewBox="0 0 42 42"><path d="M1.5 23.4V4.2Q1.5 2.2 3.5 2.2H13L21.5 10.4H38.7Q40.7 10.4 40.7 12.4V35.8Q40.7 37.8 38.7 37.8H3.5Q1.5 37.8 1.5 35.8V28.4" stroke="#5b7f62" stroke-width="2.6" fill="none" stroke-linecap="round" stroke-linejoin="round"/><path d="M14.5 21.4L19.7 26.6L29.6 17.6" stroke="#5b7f62" stroke-width="2" fill="none" stroke-linecap="round" stroke-linejoin="round"/></svg>
<div class=box style="left:1652px;top:1412px;width:700px;height:1px;background:#cbcbcb"></div>
<svg class=ic style="left:2160.00px;top:1431.00px" width="42" height="42" viewBox="0 0 42 42"><path d="M16 36H4Q1.3 36 1.3 33.3V4Q1.3 1.3 4 1.3H25.9Q28.6 1.3 28.6 4V14.6" stroke="#a8872e" stroke-width="2.4" fill="none" stroke-linecap="round" stroke-linejoin="round"/><path d="M5.4 7.7H15.2M5.4 14.8H24.2M5.4 21.8H17.2" stroke="#a8872e" stroke-width="2.4" fill="none"/><path d="M30.6 20.5A10.1 10.1 0 1 1 26.4 21.4" stroke="#a8872e" stroke-width="2.3" fill="none" stroke-linecap="round" stroke-linejoin="round"/><path d="M30.6 20.8V30.8L26.2 27.6" stroke="#a8872e" stroke-width="2.3" fill="none" stroke-linecap="round" stroke-linejoin="round"/></svg>
<svg class=ic style="left:2226.00px;top:1431.00px" width="42" height="42" viewBox="0 0 42 42"><path d="M8.4 35.8H4.2Q1.2 35.8 1.2 32.8V4.2Q1.2 1.2 4.2 1.2H27.4Q28.6 1.2 29.4 2.2L30.6 3.8" stroke="#2f7252" stroke-width="2.4" fill="none" stroke-linecap="round" stroke-linejoin="round"/><rect x="10.4" y="7.8" width="28.6" height="32.4" rx="3.6" stroke="#4f8e70" stroke-width="2.4" fill="none"/><path d="M17.4 14.5H32.4M17.4 21.5H32.4M17.4 28.5H32.4M17.4 35.6H32.4" stroke="#4f8e70" stroke-width="2.4" fill="none" stroke-linecap="round" stroke-linejoin="round"/></svg>
<svg class=ic style="left:2292.00px;top:1431.00px" width="42" height="42" viewBox="0 0 42 42"><path d="M16 36H4Q1.3 36 1.3 33.3V4Q1.3 1.3 4 1.3H25.9Q28.6 1.3 28.6 4V14.6" stroke="#3a3a3a" stroke-width="2.4" fill="none" stroke-linecap="round" stroke-linejoin="round"/><path d="M5.4 7.7H15.2M5.4 14.8H24.2M5.4 21.8H17.2" stroke="#3a3a3a" stroke-width="2.4" fill="none"/><circle cx="29.3" cy="28.7" r="8.3" stroke="#3a3a3a" stroke-width="2.9" fill="none"/><path d="M35.4 35.2L39.8 40.6" stroke="#3a3a3a" stroke-width="3.6" fill="none" stroke-linecap="round" stroke-linejoin="round"/></svg>
<svg class=ic style="left:1669.60px;top:1427.50px" width="40" height="40" viewBox="0 0 40 40"><polygon points="19.6,0 25.6,14.4 38.8,14.5 27.7,24 32.9,38.5 19.6,29.5 6.4,38.5 11.5,24 0.2,14.5 13.6,14.4" fill="#e8b43f"/></svg><svg class=ic style="left:1708.50px;top:1427.50px" width="40" height="40" viewBox="0 0 40 40"><polygon points="19.6,0 25.6,14.4 38.8,14.5 27.7,24 32.9,38.5 19.6,29.5 6.4,38.5 11.5,24 0.2,14.5 13.6,14.4" fill="#e8b43f"/></svg><svg class=ic style="left:1747.40px;top:1427.50px" width="40" height="40" viewBox="0 0 40 40"><polygon points="19.6,0 25.6,14.4 38.8,14.5 27.7,24 32.9,38.5 19.6,29.5 6.4,38.5 11.5,24 0.2,14.5 13.6,14.4" fill="#e8b43f"/></svg><svg class=ic style="left:1786.30px;top:1427.50px" width="40" height="40" viewBox="0 0 40 40"><polygon points="19.6,0 25.6,14.4 38.8,14.5 27.7,24 32.9,38.5 19.6,29.5 6.4,38.5 11.5,24 0.2,14.5 13.6,14.4" fill="#e8b43f"/></svg><svg class=ic style="left:1825.20px;top:1427.50px" width="40" height="40" viewBox="0 0 40 40"><polygon points="19.6,0 25.6,14.4 38.8,14.5 27.7,24 32.9,38.5 19.6,29.5 6.4,38.5 11.5,24 0.2,14.5 13.6,14.4" fill="#efefef" stroke="#cdcdcd" stroke-width="1" stroke-linejoin="round"/></svg>
<div class=t style="left:436.00px;transform-origin:0 50%;top:48px;font-size:27.39px;line-height:27.39px;font-weight:700;color:#5d6f82;transform:scaleX(0.8392)">INDICE DELLA PAGINA</div>
<div class=t style="left:471.00px;transform-origin:0 50%;top:143px;font-size:27.25px;line-height:27.25px;font-weight:400;color:#5a7e5f;transform:scaleX(0.9360)">Ultimi messaggi</div>
<div class=t style="left:471.00px;transform-origin:0 50%;top:200px;font-size:27.25px;line-height:27.25px;font-weight:400;color:#5a7e5f;transform:scaleX(0.9408)">Ultime istanze</div>
<div class=t style="left:471.00px;transform-origin:0 50%;top:257px;font-size:27.25px;line-height:27.25px;font-weight:400;color:#5a7e5f;transform:scaleX(0.9460)">Ultimi pagamenti</div>
<div class=t style="left:450.00px;transform-origin:0 50%;top:392px;font-size:24.06px;line-height:24.06px;font-weight:700;color:#5a7e5f;transform:scaleX(0.8481)">LEGENDA STATI</div>
<div class=t style="left:519.00px;transform-origin:0 50%;top:494px;font-size:23.04px;line-height:23.04px;font-weight:400;color:#2f3033;transform:scaleX(0.8466)">BOZZA</div>
<div class=t style="left:519.00px;transform-origin:0 50%;top:575px;font-size:23.04px;line-height:23.04px;font-weight:400;color:#2f3033;transform:scaleX(0.8518)">INVIATA</div>
<div class=t style="left:519.00px;transform-origin:0 50%;top:657px;font-size:23.04px;line-height:23.04px;font-weight:400;color:#2f3033;transform:scaleX(0.8457)">IN LAVORAZIONE</div>
<div class=t style="left:519.00px;transform-origin:0 50%;top:738px;font-size:23.04px;line-height:23.04px;font-weight:400;color:#2f3033;transform:scaleX(0.8292)">INTEGRAZIONE RICHIESTA</div>
<div class=t style="left:519.00px;transform-origin:0 50%;top:819px;font-size:23.04px;line-height:23.04px;font-weight:400;color:#2f3033;transform:scaleX(0.8360)">INTEGRAZIONE EFFETTUATA</div>
<div class=t style="left:519.00px;transform-origin:0 50%;top:900px;font-size:23.04px;line-height:23.04px;font-weight:400;color:#2f3033;transform:scaleX(0.8165)">IN SOSPESO</div>
<div class=t style="left:519.00px;transform-origin:0 50%;top:981px;font-size:23.04px;line-height:23.04px;font-weight:400;color:#2f3033;transform:scaleX(0.8119)">ACCETTATA</div>
<div class=t style="left:519.00px;transform-origin:0 50%;top:1063px;font-size:23.04px;line-height:23.04px;font-weight:400;color:#2f3033;transform:scaleX(0.8483)">RIFIUTATA</div>
<div class=t style="left:519.00px;transform-origin:0 50%;top:1144px;font-size:23.04px;line-height:23.04px;font-weight:400;color:#2f3033;transform:scaleX(0.8383)">ARCHIVIATA</div>
<div class=t style="left:907.00px;transform-origin:0 50%;top:151px;font-size:59.86px;line-height:59.86px;font-weight:700;color:#5d6f82;transform:scaleX(0.9267)">Ultime istanze</div>
<div class=t style="left:2143.00px;transform-origin:0 50%;top:65px;font-size:24.20px;line-height:24.20px;font-weight:700;color:#ffffff;transform:scaleX(0.9165)">Vedi tutti</div>
<div class=t style="left:927.00px;transform-origin:0 50%;top:276px;font-size:18.41px;line-height:18.41px;font-weight:400;color:#5d6f82;transform:scaleX(1.0746)">23/02/2023</div>
<div class=t style="right:1199.00px;transform-origin:100% 50%;top:276px;font-size:18.70px;line-height:18.70px;font-weight:700;color:#5d6f82;transform:scaleX(0.9700)">DC00000011</div>
<div class=t style="right:1308.84px;transform-origin:100% 50%;top:276px;font-size:18.70px;line-height:18.70px;font-weight:400;color:#5d6f82;transform:scaleX(0.9500)">Nr Istanza:</div>
<div class=t style="left:927.00px;transform-origin:0 50%;top:335px;font-size:29.71px;line-height:29.71px;font-weight:700;color:#5a7e5f;transform:scaleX(0.9061)">Presentare domanda per un contributo</div>
<div class=t style="left:927.00px;transform-origin:0 50%;top:402px;font-size:23.19px;line-height:23.19px;font-weight:400;color:#5d6f82;transform:scaleX(0.8615)">C.F. del beneficiario:</div>
<div class=t style="left:927.00px;transform-origin:0 50%;top:527px;font-size:18.26px;line-height:18.26px;font-weight:700;color:#5a7e5f;text-decoration:underline;text-decoration-thickness:1px;text-underline-offset:1.5px;transform:scaleX(0.9253)">Allegati: 2</div>
<div class=t style="left:1670.00px;transform-origin:0 50%;top:276px;font-size:18.41px;line-height:18.41px;font-weight:400;color:#5d6f82;transform:scaleX(1.0746)">23/02/2023</div>
<div class=t style="right:457.00px;transform-origin:100% 50%;top:276px;font-size:18.70px;line-height:18.70px;font-weight:700;color:#5d6f82;transform:scaleX(0.9700)">BE00000017</div>
<div class=t style="right:566.84px;transform-origin:100% 50%;top:276px;font-size:18.70px;line-height:18.70px;font-weight:400;color:#5d6f82;transform:scaleX(0.9500)">Nr Istanza:</div>
<div class=t style="left:1670.00px;transform-origin:0 50%;top:335px;font-size:29.71px;line-height:29.71px;font-weight:700;color:#5a7e5f;transform:scaleX(0.8944)">Presentare domanda per bonus economici</div>
<div class=t style="left:1670.00px;transform-origin:0 50%;top:402px;font-size:23.19px;line-height:23.19px;font-weight:400;color:#5d6f82;transform:scaleX(0.8615)">C.F. del beneficiario:</div>
<div class=t style="left:1670.00px;transform-origin:0 50%;top:527px;font-size:18.26px;line-height:18.26px;font-weight:700;color:#5a7e5f;text-decoration:underline;text-decoration-thickness:1px;text-underline-offset:1.5px;transform:scaleX(0.9253)">Allegati: 2</div>
<div class=t style="left:1670.00px;transform-origin:0 50%;top:569px;font-size:18.26px;line-height:18.26px;font-weight:700;color:#5a7e5f;text-decoration:underline;text-decoration-thickness:1px;text-underline-offset:1.5px;transform:scaleX(0.9353)">Documenti Integrati: 1</div>
<div class=t style="left:927.00px;transform-origin:0 50%;top:756px;font-size:18.41px;line-height:18.41px;font-weight:400;color:#5d6f82;transform:scaleX(1.0746)">23/02/2023</div>
<div class=t style="right:1199.00px;transform-origin:100% 50%;top:756px;font-size:18.70px;line-height:18.70px;font-weight:700;color:#5d6f82;transform:scaleX(0.9700)">DC00000010</div>
<div class=t style="right:1309.84px;transform-origin:100% 50%;top:756px;font-size:18.70px;line-height:18.70px;font-weight:400;color:#5d6f82;transform:scaleX(0.9500)">Nr Istanza:</div>
<div class=t style="left:927.00px;transform-origin:0 50%;top:815px;font-size:29.71px;line-height:29.71px;font-weight:700;color:#5a7e5f;transform:scaleX(0.9061)">Presentare domanda per un contributo</div>
<div class=t style="left:927.00px;transform-origin:0 50%;top:882px;font-size:23.19px;line-height:23.19px;font-weight:400;color:#5d6f82;transform:scaleX(0.8615)">C.F. del beneficiario:</div>
<div class=t style="left:927.00px;transform-origin:0 50%;top:1007px;font-size:18.26px;line-height:18.26px;font-weight:700;color:#5a7e5f;text-decoration:underline;text-decoration-thickness:1px;text-underline-offset:1.5px;transform:scaleX(0.9115)">Allegati: 1</div>
<div class=t style="left:1670.00px;transform-origin:0 50%;top:756px;font-size:18.41px;line-height:18.41px;font-weight:400;color:#5d6f82;transform:scaleX(1.0746)">21/02/2023</div>
<div class=t style="right:457.00px;transform-origin:100% 50%;top:756px;font-size:18.70px;line-height:18.70px;font-weight:700;color:#5d6f82;transform:scaleX(0.9700)">BE00000016</div>
<div class=t style="right:566.84px;transform-origin:100% 50%;top:756px;font-size:18.70px;line-height:18.70px;font-weight:400;color:#5d6f82;transform:scaleX(0.9500)">Nr Istanza:</div>
<div class=t style="left:1670.00px;transform-origin:0 50%;top:815px;font-size:29.71px;line-height:29.71px;font-weight:700;color:#5a7e5f;transform:scaleX(0.8944)">Presentare domanda per bonus economici</div>
<div class=t style="left:1670.00px;transform-origin:0 50%;top:882px;font-size:23.19px;line-height:23.19px;font-weight:400;color:#5d6f82;transform:scaleX(0.8615)">C.F. del beneficiario:</div>
<div class=t style="left:1670.00px;transform-origin:0 50%;top:1007px;font-size:18.26px;line-height:18.26px;font-weight:700;color:#5a7e5f;text-decoration:underline;text-decoration-thickness:1px;text-underline-offset:1.5px;transform:scaleX(0.9253)">Allegati: 2</div>
<div class=t style="left:1670.00px;transform-origin:0 50%;top:1049px;font-size:18.26px;line-height:18.26px;font-weight:700;color:#5a7e5f;text-decoration:underline;text-decoration-thickness:1px;text-underline-offset:1.5px;transform:scaleX(0.9353)">Documenti Integrati: 1</div>
<div class=t style="left:927.00px;transform-origin:0 50%;top:1236px;font-size:18.41px;line-height:18.41px;font-weight:400;color:#5d6f82;transform:scaleX(1.0746)">20/02/2023</div>
<div class=t style="right:1199.00px;transform-origin:100% 50%;top:1236px;font-size:18.70px;line-height:18.70px;font-weight:700;color:#5d6f82;transform:scaleX(0.9700)">BE00000015</div>
<div class=t style="right:1308.84px;transform-origin:100% 50%;top:1236px;font-size:18.70px;line-height:18.70px;font-weight:400;color:#5d6f82;transform:scaleX(0.9500)">Nr Istanza:</div>
<div class=t style="left:927.00px;transform-origin:0 50%;top:1295px;font-size:29.71px;line-height:29.71px;font-weight:700;color:#5a7e5f;transform:scaleX(0.8941)">Presentare domanda per bonus economici</div>
<div class=t style="left:927.00px;transform-origin:0 50%;top:1362px;font-size:23.19px;line-height:23.19px;font-weight:400;color:#5d6f82;transform:scaleX(0.8615)">C.F. del beneficiario:</div>
<div class=t style="left:927.00px;transform-origin:0 50%;top:1487px;font-size:18.26px;line-height:18.26px;font-weight:700;color:#5a7e5f;text-decoration:underline;text-decoration-thickness:1px;text-underline-offset:1.5px;transform:scaleX(0.9253)">Allegati: 2</div>
<div class=t style="left:1670.00px;transform-origin:0 50%;top:1236px;font-size:18.41px;line-height:18.41px;font-weight:400;color:#5d6f82;transform:scaleX(1.0746)">20/02/2023</div>
<div class=t style="right:457.00px;transform-origin:100% 50%;top:1236px;font-size:18.70px;line-height:18.70px;font-weight:700;color:#5d6f82;transform:scaleX(0.9700)">AM00000005</div>
<div class=t style="right:569.85px;transform-origin:100% 50%;top:1236px;font-size:18.70px;line-height:18.70px;font-weight:400;color:#5d6f82;transform:scaleX(0.9500)">Nr Istanza:</div>
<div class=t style="left:1670.00px;transform-origin:0 50%;top:1295px;font-size:29.71px;line-height:29.71px;font-weight:700;color:#5a7e5f;transform:scaleX(0.8969)">Presentare domanda per assegno di</div>
<div class=t style="left:1670.00px;transform-origin:0 50%;top:1341px;font-size:29.71px;line-height:29.71px;font-weight:700;color:#5a7e5f;transform:scaleX(0.9408)">maternità</div>
<div class=t style="left:1670.00px;transform-origin:0 50%;top:1491px;font-size:18.26px;line-height:18.26px;font-weight:700;color:#5a7e5f;text-decoration:underline;text-decoration-thickness:1px;text-underline-offset:1.5px;transform:scaleX(0.9253)">Allegati: 2</div>
</body></html>
